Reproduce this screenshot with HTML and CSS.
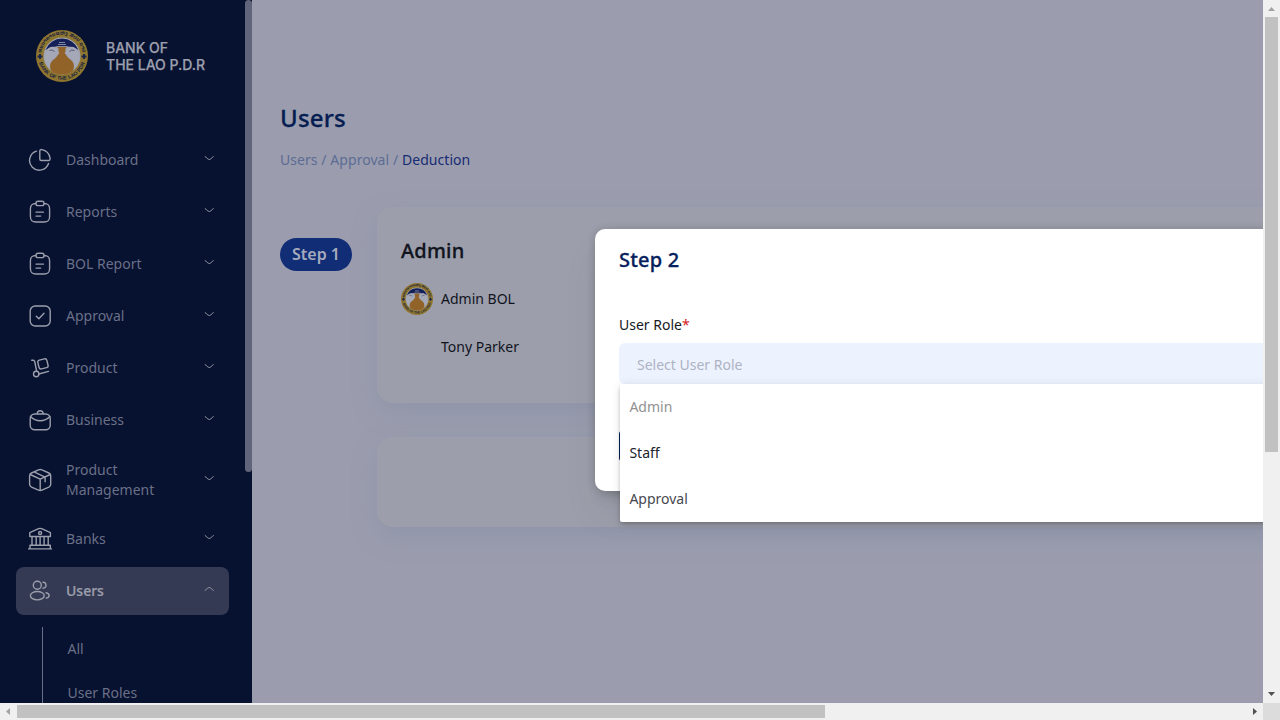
FILE: index.html
```html
<!DOCTYPE html>
<html lang="en">
<head>
<meta charset="utf-8">
<title>Users - Bank of the Lao P.D.R</title>
<link rel="stylesheet" href="styles.css">
</head>
<body>
<svg class="defs" aria-hidden="true">
  <symbol id="down" viewBox="0 0 12 8"><path d="M1.300 1.800c2 1.500 3.100 3.300 4.700 3.300s2.700-1.800 4.700-3.300"/></symbol>
  <symbol id="clip" viewBox="0 0 24 24"><path d="M8 3.500C3.800 3.700 2.400 5 2.400 9v7.300c0 4.300 1.300 5.700 5.600 5.700h8c4.300 0 5.600-1.400 5.600-5.700V9c0-4-1.400-5.300-5.600-5.500M10 5.600h4c1.500 0 2-.6 2-2.200s-.5-2.100-2-2.100h-4c-1.500 0-2 .5-2 2.100s.5 2.200 2 2.200zM8 12.100h7.500M8 16.100h4.700"/></symbol>
  <symbol id="seal" viewBox="0 0 52 52">
    <circle cx="26" cy="26" r="26" fill="#8f762f"/>
    <circle cx="26" cy="26" r="18.500" fill="#a1a4b3"/>
    <path d="M9.500 20a17.600 17.600 0 0 1 33 0Q35 15 26 17 17 15 9.500 20z" fill="#141f58"/>
    <path d="M20.500 16.500h11l-2 2v4.500q1 4 6 7.500 4 4 1.500 10-4 4-11 4t-11-4q-2.500-6 1.500-10 5-3.500 6-7.500v-4.500z" fill="#926329"/>
    <path d="M18 17q-5-1-7.500 4l-2 7 4 10 3-9 5-3 3-3zM34 17q5-1 7.500 4l2 7-4 10-3-9-5-3-3-3z" fill="#a5a8b6"/>
    <path d="M18.500 21.500q-2-2.500-5-1M33.500 21.500q2-2.500 5-1" fill="none" stroke="#30375e" stroke-width=".7"/>
    <path d="M23 12.500h6M22 14.500h8M20.500 16.500h11" stroke="#8f94aa" stroke-width=".9"/>
    <path d="M1.500 26.500h5M4 24v5M45.500 26.500h5M48 24v5" stroke="#1a254d" stroke-width="1.800"/>
    <path id="arcTop" d="M5.500 21a21 21 0 0 1 41 0" fill="none"/>
    <path id="arcBottom" d="M2.600 31a24 24 0 0 0 46.800 0" fill="none"/>
    <text class="seal-text" text-anchor="middle"><textPath href="#arcTop" startOffset="50%">ທະນາຄານແຫ່ງ ສປປ ລາວ</textPath></text>
    <text class="seal-text latin" text-anchor="middle"><textPath href="#arcBottom" startOffset="50%">BANK OF THE LAO PDR</textPath></text>
  </symbol>
</svg>

<div class="window">
  <div class="viewport">
    <aside class="sidebar">
      <div class="brand">
        <svg class="logo"><use href="#seal"/></svg>
        <div>BANK OF<br>THE LAO P.D.R</div>
      </div>
      <nav class="nav">
        <a class="item"><svg class="icon" viewBox="0 0 24 24"><path d="M8.500 3.200A9.700 9.700 0 1 0 20.500 15.500M11.800 3c0-1.200.8-1.600 2-1.400A10.300 10.300 0 0 1 22 10c.3 1.700-.2 2.500-1.500 2.500h-7.300c-1 0-1.400-.5-1.400-1.500z"/></svg><span>Dashboard</span><svg class="chev"><use href="#down"/></svg></a>
        <a class="item"><svg class="icon"><use href="#clip"/></svg><span>Reports</span><svg class="chev"><use href="#down"/></svg></a>
        <a class="item"><svg class="icon"><use href="#clip"/></svg><span>BOL Report</span><svg class="chev"><use href="#down"/></svg></a>
        <a class="item"><svg class="icon" viewBox="0 0 24 24"><rect x="2.200" y="2" width="20" height="20" rx="5"/><path d="m8.300 12.200 2.600 2.500 5.100-5.500"/></svg><span>Approval</span><svg class="chev"><use href="#down"/></svg></a>
        <a class="item"><svg class="icon" viewBox="0 0 24 24"><path d="M3.700 4.200l1.700.1q1 .2 1.400 1.500l1.800 9.200M10.800 18l9.700-2.600"/><circle cx="8.200" cy="18" r="2.700"/><rect x="10.300" y="3.400" width="9.300" height="9" rx="2" transform="rotate(-14 15 7.900)"/></svg><span>Product</span><svg class="chev"><use href="#down"/></svg></a>
        <a class="item"><svg class="icon" viewBox="0 0 24 24"><rect x="2.200" y="6" width="20" height="15.800" rx="4.500"/><path d="M9.300 5.500c0-2 .8-2.800 2.900-2.800s2.900.8 2.900 2.800M2.500 8.500q4 4.200 9.700 4.200t9.700-4.200"/></svg><span>Business</span><svg class="chev"><use href="#down"/></svg></a>
        <a class="item tall"><svg class="icon" viewBox="0 0 24 24"><path d="M10.500 1.900q1.700-.7 3.400 0l7 3.100q1.800.8 1.800 2.800v8.400q0 2-1.800 2.900l-7 3q-1.700.8-3.400 0l-7-3q-1.900-.9-1.900-2.900V7.800q0-2 1.900-2.800zM2.200 6.500l10 4.700 10-4.700M12.200 11.500v11M6.500 4.200l10.600 5v4.500"/></svg><span>Product<br>Management</span><svg class="chev"><use href="#down"/></svg></a>
        <a class="item"><svg class="icon" viewBox="0 0 24 24"><path d="M1.800 9.500V5.700l8.800-4q1.500-.6 3 0l8.800 4v3.800zM4 9.500v8.400M8.200 9.500v8.400M12.100 9.500v8.400M16.100 9.500v8.400M20.200 9.500v8.400M2 21.700v-3.500h20.300v3.500M.5 21.900h23"/><circle cx="12.100" cy="6" r="1.500"/></svg><span>Banks</span><svg class="chev"><use href="#down"/></svg></a>
        <a class="item active"><svg class="icon" viewBox="0 0 24 24"><circle cx="9.300" cy="6.200" r="4"/><ellipse cx="9.300" cy="16.700" rx="6.900" ry="4.200"/><path d="M15 3.200c4-.2 4 6.100 0 6M18 13.700c4 .8 4.200 4.400.3 5.500"/></svg><span>Users</span><svg class="chev up"><use href="#down"/></svg></a>
      </nav>
      <div class="subnav"><a>All</a><a>User Roles</a></div>
      <div class="side-thumb"></div>
    </aside>

    <main class="main">
      <h1>Users</h1>
      <div class="crumbs">Users / Approval / <b>Deduction</b></div>
      <div class="step-row">
        <div class="badge">Step 1</div>
        <div class="cards">
          <section class="card admin">
            <h2>Admin</h2>
            <div class="person"><svg class="avatar"><use href="#seal"/></svg>Admin BOL</div>
            <div class="person"><span class="avatar"></span>Tony Parker</div>
          </section>
          <section class="card empty"></section>
        </div>
      </div>
    </main>

    <div class="dialog">
      <h2>Step 2</h2>
      <label>User Role<em>*</em></label>
      <div class="select"><span>Select User Role</span><svg viewBox="0 0 12 8"><path d="m1 7 5-5 5 5"/></svg></div>
      <div class="button"></div>
      <div class="menu"><div class="disabled">Admin</div><div class="hover">Staff</div><div>Approval</div></div>
    </div>
  </div>

  <div class="vbar">
    <svg width="17" height="17"><path d="M5 11h7L8.500 7z" fill="#a3a3a3"/></svg>
    <div class="vthumb"></div>
    <svg width="17" height="17"><path d="M5 6h7l-3.500 4z" fill="#505050"/></svg>
  </div>
  <div class="hbar">
    <svg width="17" height="17"><path d="M10 5v7L6 8.500z" fill="#a3a3a3"/></svg>
    <div class="hthumb"></div>
    <svg width="17" height="17"><path d="M7 5v7l4-3.500z" fill="#505050"/></svg>
  </div>
  <div class="corner"></div>
</div>
</body>
</html>
```

FILE: styles.css
```css
* { box-sizing: border-box; }
body { margin: 0; font: 14px/20px "Noto Sans", sans-serif; overflow: hidden; }
h1, h2 { margin: 0; font-weight: 500; letter-spacing: .2px; -webkit-text-stroke: .3px currentColor; }
.defs { position: absolute; width: 0; height: 0; overflow: visible; }
.seal-text { font: bold 4.8px "DejaVu Sans", sans-serif; fill: #1b2440; }
.latin { font: bold 5.2px "Liberation Sans", sans-serif; }

.window { display: grid; grid-template: 703px 17px / 1263px 17px; width: 1280px; height: 720px; }
.viewport { position: relative; display: flex; overflow: hidden; background: #9b9dae; }

.sidebar { position: relative; width: 252px; height: 703px; flex: none; overflow: hidden; background: #071130; color: #6a7087; }
.brand { display: flex; align-items: center; gap: 18px; height: 112px; padding-left: 36px; font: 500 14px/17px Inter, sans-serif; color: #9c9fad; -webkit-text-stroke: .25px currentColor; }
.logo { width: 52px; height: 52px; -webkit-text-stroke: 0; }
.nav { display: flex; flex-direction: column; gap: 4px; width: 213px; margin: 24px 0 0 16px; }
.item { display: flex; align-items: center; height: 48px; padding: 0 15px 0 12px; border-radius: 8px; }
.item.tall { height: 63px; }
.item span { flex: 1; margin-left: 14px; }
.icon { width: 24px; height: 24px; fill: none; stroke: #9c9fac; stroke-width: 1.400; stroke-linecap: round; stroke-linejoin: round; }
.chev { width: 10.500px; height: 7px; margin-bottom: 3px; fill: none; stroke: #9c9fac; stroke-width: 1.100; stroke-linecap: round; }
.up { transform: rotate(180deg); margin-bottom: 5px; }
.active { background: #343a53; color: #9c9fac; font-weight: 500; }
.active span { -webkit-text-stroke: .2px currentColor; }
.subnav { display: flex; flex-direction: column; margin: 12px 0 0 42px; border-left: 1px solid #6a7087; padding-left: 24.500px; }
.subnav a { height: 44px; line-height: 44px; }
.side-thumb { position: absolute; top: 0; right: 0; width: 7px; height: 472px; border-radius: 4px; background: #61657b; }

.main { width: 1400px; flex: none; padding: 101px 0 0 28px; }
.main h1 { font-size: 24px; line-height: 34px; color: #061d52; }
.crumbs { margin-top: 15px; letter-spacing: .06px; color: #5c6c94; }
.crumbs b { font-weight: 400; color: #172b73; }
.step-row { display: flex; align-items: flex-start; gap: 25px; margin-top: 37px; }
.badge { width: 72px; height: 33px; margin-top: 31px; border-radius: 17px; background: #102d76; color: #a5abbd; font-size: 16px; line-height: 33px; font-weight: 600; text-align: center; }
.cards { display: flex; flex-direction: column; gap: 34px; width: 1200px; }
.card { background: #9c9fab; border-radius: 16px; box-shadow: 0 10px 24px rgba(130, 140, 165, .45); }
.admin { height: 196px; padding: 28px 24px; color: #11131d; }
.admin h2 { font-size: 20px; line-height: 32px; margin-bottom: 16px; }
.empty { height: 90px; }
.person { display: flex; align-items: center; gap: 8px; height: 32px; margin-bottom: 16px; }
.avatar { width: 32px; height: 32px; }

.dialog { position: absolute; left: 595px; top: 229px; width: 720px; height: 262px; padding: 16px 24px; background: #fff; border-radius: 10px; box-shadow: 0 11px 15px -7px rgba(0,0,0,.2), 0 24px 38px 3px rgba(0,0,0,.04), 0 0 8px rgba(0,0,0,.16); }
.dialog h2 { font-size: 20px; line-height: 30px; color: #06205c; }
.dialog label { display: block; margin-top: 40px; color: #171a22; }
.dialog em { font-style: normal; color: #d32020; }
.select { display: flex; justify-content: space-between; align-items: center; height: 41px; margin-top: 8px; padding: 2px 18px 0; border-radius: 6px; background: #edf2ff; color: #aeb3c3; }
.select svg { width: 12px; height: 8px; margin-right: -4px; margin-bottom: 3px; fill: none; stroke: #10131c; stroke-width: 1.500; }
.button { height: 30px; margin-top: 47px; border-radius: 3px; background: #061f58; }
.menu { position: absolute; left: 25px; top: 155px; width: 680px; height: 138px; background: #fff; color: #46484d; border-radius: 2px; box-shadow: 0 2px 4px -1px rgba(0,0,0,.2), 0 4px 5px rgba(0,0,0,.08), 0 1px 10px rgba(0,0,0,.1); }
.menu div { height: 46px; padding-left: 9.400px; line-height: 46px; }
.menu .disabled { color: #929292; }
.menu .hover { color: #20232b; }

.vbar { display: flex; flex-direction: column; background: #f0f0f0; }
.vthumb { width: 13px; height: 435px; margin: 0 2px auto; background: #c1c1c1; }
.hbar { display: flex; background: #f0f0f0; }
.hthumb { width: 808px; height: 13px; margin: 2px auto 2px 0; background: #c1c1c1; }
.corner { background: #dcdcdc; }
```
